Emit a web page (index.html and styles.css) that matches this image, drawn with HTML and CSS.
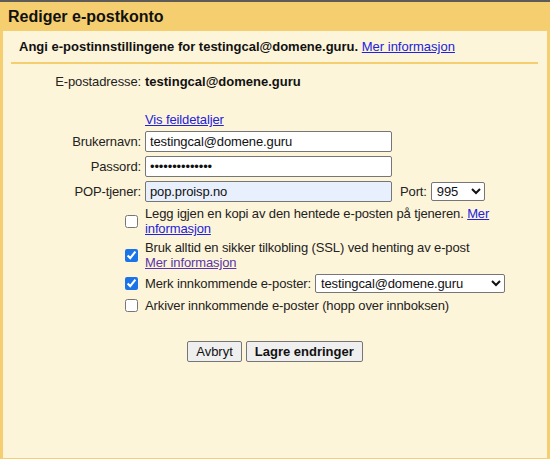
FILE: index.html
```html
<!DOCTYPE html>
<html lang="no">
<head>
<meta charset="utf-8">
<title>Rediger e-postkonto</title>
<link rel="stylesheet" href="styles.css">
</head>
<body>
<div class="dialog">
  <div class="title">Rediger e-postkonto</div>
  <div class="panel">
    <div class="intro">Angi e-postinnstillingene for testingcal@domene.guru. <a href="#" class="link">Mer informasjon</a></div>
    <div class="sep"></div>
    <div class="form">
      <div class="lbl">E-postadresse:</div>
      <div class="val bold">testingcal@domene.guru</div>

      <div class="lbl"></div>
      <div class="val errlink"><a href="#" class="link">Vis feildetaljer</a></div>

      <div class="lbl mid">Brukernavn:</div>
      <div class="val"><input class="field" type="text" value="testingcal@domene.guru"></div>

      <div class="lbl mid">Passord:</div>
      <div class="val"><input class="field" type="password" value="abcdefghijklmn"></div>

      <div class="lbl mid">POP-tjener:</div>
      <div class="val inline"><input class="field auto" type="text" value="pop.proisp.no"><span class="portlbl">Port:</span><select class="sel port"><option>995</option></select></div>

      <div class="lbl mid"><input type="checkbox" class="cb"></div>
      <div class="val wrap">Legg igjen en kopi av den hentede e-posten på tjeneren. <a href="#" class="link">Mer informasjon</a></div>

      <div class="lbl mid"><input type="checkbox" class="cb" checked></div>
      <div class="val wrap">Bruk alltid en sikker tilkobling (SSL) ved henting av e-post<br><a href="#" class="link visited">Mer informasjon</a></div>

      <div class="lbl mid"><input type="checkbox" class="cb" checked></div>
      <div class="val inline">Merk innkommende e-poster:<select class="sel label"><option>testingcal@domene.guru</option></select></div>

      <div class="lbl mid"><input type="checkbox" class="cb"></div>
      <div class="val last">Arkiver innkommende e-poster (hopp over innboksen)</div>
    </div>
    <div class="buttons">
      <button class="btn">Avbryt</button>
      <button class="btn primary">Lagre endringer</button>
    </div>
  </div>
</div>
</body>
</html>
```
FILE: styles.css
```css
html, body {
  margin: 0;
  padding: 0;
}
body {
  width: 550px;
  height: 459px;
  overflow: hidden;
  font-family: "Liberation Sans", Arial, sans-serif;
  font-size: 13px;
  color: #222;
}
.dialog {
  height: 457px;
  border-top: 2px solid #5c5b57;
  background: #f5cf6f;
  display: flex;
  flex-direction: column;
}
.title {
  height: 29px;
  box-sizing: border-box;
  padding: 6px 0 0 8px;
  font-size: 16px;
  font-weight: bold;
  color: #111;
}
.panel {
  flex: 1;
  margin: 0 3px 1px 3px;
  background: #fdf5d9;
}
.intro {
  padding: 8px 0 0 16px;
  line-height: 15px;
  font-weight: bold;
  color: #111;
}
.intro .link {
  font-weight: normal;
}
.link {
  color: #2222dd;
  text-decoration: underline;
}
.link.visited {
  color: #5b35a8;
}
.sep {
  height: 2px;
  background: #f5cf6f;
  margin: 8px 9px 0 8px;
}
.form {
  display: grid;
  grid-template-columns: 138px 380px;
  column-gap: 4px;
  row-gap: 4px;
  margin-top: 10px;
  line-height: 15px;
  letter-spacing: -0.12px;
}
.lbl {
  text-align: right;
  display: flex;
  justify-content: flex-end;
}
.lbl.mid {
  align-items: center;
}
.val {
  display: flex;
  align-items: center;
}
.val.wrap {
  display: block;
}
.val.inline {
  display: flex;
  align-items: center;
}
.val.last {
  margin-top: 1px;
}
.bold {
  font-weight: bold;
  color: #111;
  letter-spacing: 0;
}
.errlink {
  margin-top: 19px;
}
.field {
  box-sizing: border-box;
  width: 247px;
  height: 21px;
  margin: 0;
  padding: 1px 4px;
  border: 1px solid #767676;
  border-radius: 2px;
  background: #fff;
  font-family: "Liberation Sans", Arial, sans-serif;
  font-size: 13px;
  letter-spacing: -0.12px;
  color: #111;
}
.field.auto {
  background: #e8f0fe;
}
.portlbl {
  margin: 0 4px 0 8px;
}
.sel {
  box-sizing: border-box;
  height: 19px;
  margin: 0;
  padding: 0 1px;
  border: 1px solid #767676;
  border-radius: 2px;
  background: #fff;
  font-family: "Liberation Sans", Arial, sans-serif;
  font-size: 13px;
  letter-spacing: -0.12px;
  color: #111;
}
.sel.port {
  width: 54px;
}
.sel.label {
  width: 190px;
  margin-left: 4px;
}
.cb {
  width: 13px;
  height: 13px;
  margin: 0 3px 0 0;
  accent-color: #1a73e8;
}
.buttons {
  display: flex;
  justify-content: center;
  gap: 4px;
  margin-top: 28px;
}
.btn {
  height: 21px;
  padding: 1px 8px;
  border: 1px solid #767676;
  border-radius: 2px;
  background: #efefef;
  font-family: "Liberation Sans", Arial, sans-serif;
  font-size: 13px;
  color: #111;
}
.btn.primary {
  font-weight: bold;
}
```
